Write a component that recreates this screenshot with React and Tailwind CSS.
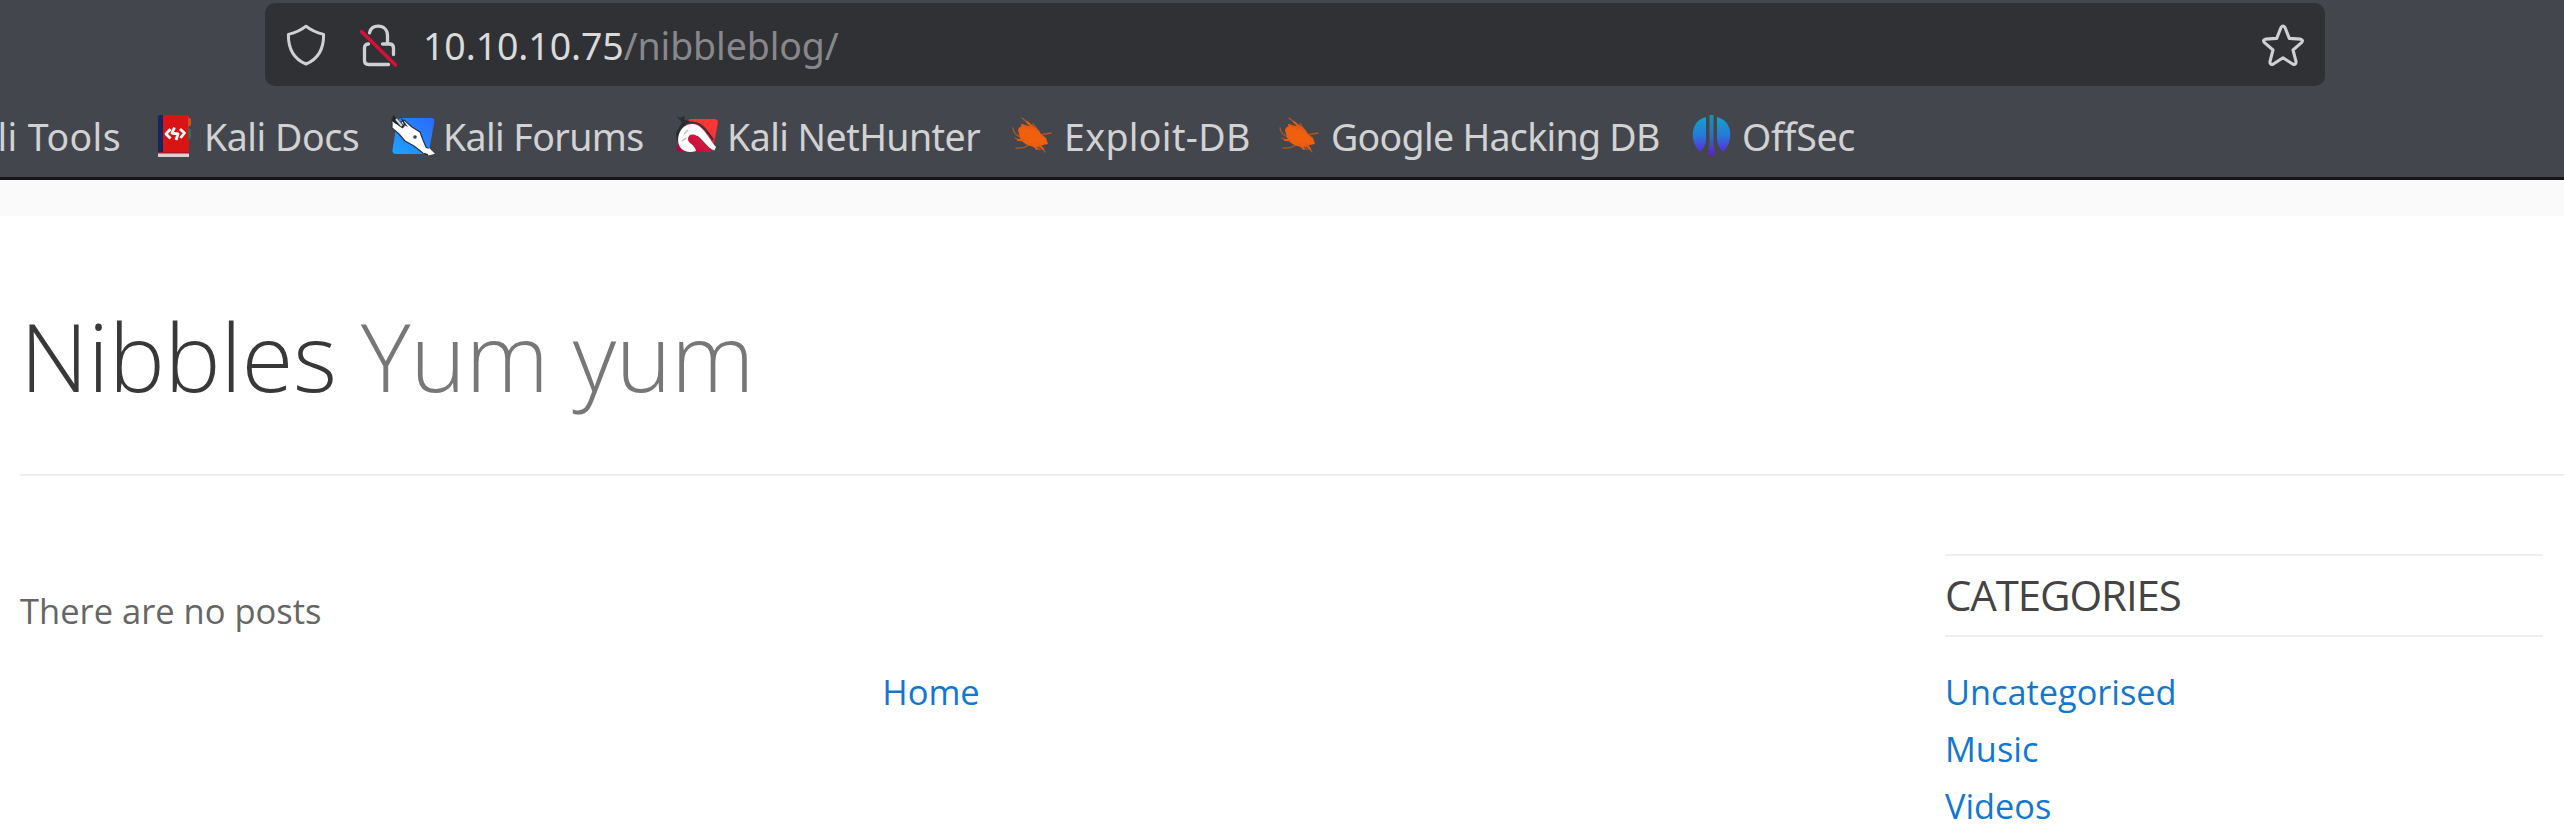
const shell = "h-[42px] w-[42px] shrink-0 overflow-visible";

function Shield() {
  return (
    <svg viewBox="0 0 42 42" className={shell} fill="none" stroke="#d0d0d2" strokeWidth="3" strokeLinejoin="round">
      <path d="M21 2.2C16 6.4 10 8.8 3.4 10.4C3.2 23 8 34.5 21 40C34 34.5 38.800 23 38.600 10.400C32 8.800 26 6.400 21 2.200Z" />
    </svg>
  );
}

function InsecureLock() {
  return (
    <svg viewBox="0 0 42 42" className={shell} fill="none" strokeLinecap="round" strokeLinejoin="round">
      <path d="M11.500 8.800C12.500 4.500 16 2.200 20.200 2.200C25.800 2.200 29.500 6 29.500 11.500V20M24.500 20H31.500Q35.500 20 35.500 24V30.500M10.500 20H10Q6.500 20 6.500 24V36.500Q6.500 40.500 10.500 40.500H30.500" stroke="#d0d0d2" strokeWidth="3.300" />
      <path d="M3.500 7.500L37.500 41" stroke="#d90f3b" strokeWidth="3.400" />
    </svg>
  );
}

function Star() {
  return (
    <svg viewBox="0 0 42 42" className={shell} fill="none" stroke="#d0d0d2" strokeWidth="3.100" strokeLinejoin="round">
      <path d="M19 3.500Q21 0.500 23 3.500L27.300 14.400L38.500 15.100Q41.800 16.200 39.500 18.600L31 26L34 37.300Q34.300 41.200 31 40.200L21 33.800L11 40.200Q7.700 41.200 8 37.300L11 26L2.500 18.600Q0.200 16.200 3.500 15.100L14.700 14.400Z" />
    </svg>
  );
}

function DocsIcon() {
  return (
    <svg viewBox="0 0 42 42" className={shell}>
      <path d="M2 2Q2 0 4 0H8V38H2Z" fill="#16265f" />
      <path d="M7 0H31Q33 0 33 2V38H7Z" fill="#d81414" />
      <path d="M32 2L35 4V10L32 12Z" fill="#c8561c" />
      <path d="M32 13L35 14V23L32 25Z" fill="#3b6b52" />
      <path d="M2 37.500H33V42H2Z" fill="#dccfd3" />
      <path d="M2 37H33V38.500H2Z" fill="#a81820" />
      <path d="M14.500 14L10 19L14.500 23.500M18.500 12.500L16 18L22 19L20 25M24 14L28.500 18L24.500 23" fill="none" stroke="#fff" strokeWidth="2.800" strokeLinejoin="round" />
    </svg>
  );
}

function ForumsIcon() {
  return (
    <svg viewBox="0 0 42 42" className={shell}>
      <defs>
        <linearGradient id="forum" x1="0" y1="1" x2="1" y2="0">
          <stop offset="0" stopColor="#1fa4ff" />
          <stop offset="1" stopColor="#2b68fb" />
        </linearGradient>
      </defs>
      <path d="M8 3H39Q43 3 42.300 7L37 36Q36 39 33 39H4Q0 39 0.500 35L5 7Z" fill="url(#forum)" />
      <path d="M0 4L8 8L12 5L20 12L28 17L31 25L34 32L39 35L37 40L31 38L22 31L13 26L7 19L0 13Z" fill="#fff" stroke="#293247" strokeWidth="1.200" />
      <path d="M1 0L13 11L10 14L0 6ZM8 1L16 12L12 10Z" fill="#24252a" />
      <path d="M4 4L10 11" stroke="#d7d7d7" strokeWidth="2" />
      <path d="M3 10L20 22L32 36L37 35L40 38L36 39" fill="none" stroke="#fff" strokeWidth="3" />
      <circle cx="23" cy="22" r="1.800" fill="#30405c" />
    </svg>
  );
}

function NetHunterIcon() {
  return (
    <svg viewBox="0 0 42 42" className={shell}>
      <defs>
        <linearGradient id="hunter" x1="0" y1="1" x2="1" y2="0">
          <stop offset="0" stopColor="#b5003f" />
          <stop offset="0.500" stopColor="#d9173b" />
          <stop offset="0.700" stopColor="#ff3434" />
        </linearGradient>
      </defs>
      <path d="M13 4H38Q42.500 4 41.800 8L37 34Q36 37 33 37H4Q0 37 0.500 33L4 22Z" fill="url(#hunter)" />
      <path d="M0 1L4 3L9 1L8 5L14 6L6 14L1 27L0 18L6 7Z" fill="#2b2c31" />
      <path d="M20 36C13 38 6 37 3 30C0 20 6 9 16 9C27 9 32 23 40 32L38 36C31 33 27 25 21 21C16 18 12 20 12 24C12 29 19 29 20 36Z" fill="#fff" />
      <path d="M11 8.500C21 5 28 11 37 25" fill="none" stroke="#35323a" strokeWidth="2" />
      <path d="M21 21C27 25 31 33 38 36" fill="none" stroke="#4a2a35" strokeWidth="1" />
      <path d="M8 19L12 15M6 26L10 23" stroke="#b9b9bd" strokeWidth="1.200" />
    </svg>
  );
}

function ExploitIcon() {
  return (
    <svg viewBox="0 0 42 42" className={shell}>
      <g transform="translate(0 2)">
        <path d="M6 13C8 8 13 8 18 9C23 9 27 13 29 17L34 21L36 27L31 28L26 30C18 30 11 27 8 21Z" fill="#ef5f0e" />
        <g fill="none" stroke="#e05c12" strokeLinecap="round">
          <path d="M10 8L18 11M15 5L24 13M11 23L6 23M20 27L25 32M27 28L31 32" strokeWidth="2.200" />
          <path d="M10 1L20 9M21 7L27 15M1 11Q2 18 9 20M28 18L39 16M28 27L33 35M24 26L28 33M17 28Q11 32 4 31M9 24L3 21" strokeWidth="1.300" opacity="0.700" />
        </g>
      </g>
    </svg>
  );
}

function OffSecIcon() {
  return (
    <svg viewBox="0 0 42 42" className={shell}>
      <defs>
        <linearGradient id="offsec" gradientUnits="userSpaceOnUse" x1="0" y1="1" x2="0" y2="41">
          <stop offset="0" stopColor="#12a5c8" />
          <stop offset="0.500" stopColor="#2878d6" />
          <stop offset="1" stopColor="#6518df" />
        </linearGradient>
      </defs>
      <g fill="url(#offsec)">
        <path d="M15 2V24Q15 31 9 37C-2 26-1 6 15 2Z" />
        <path d="M26 2V24Q26 31 32 37C43 26 42 6 26 2Z" />
        <path d="M18.500 0H22.500V28L24 39Q20.500 44 17 39L18.500 28Z" opacity="0.800" />
      </g>
    </svg>
  );
}

const bookmarks = [
  { name: "Kali Docs", Icon: DocsIcon, box: "w-[236px]", gap: "ml-[6px]", track: "tracking-[-0.45px]" },
  { name: "Kali Forums", Icon: ForumsIcon, box: "w-[284px]", gap: "ml-[9px]", track: "tracking-[-0.6px]" },
  { name: "Kali NetHunter", Icon: NetHunterIcon, box: "w-[336px]", gap: "ml-[9px]", track: "tracking-[-0.55px]" },
  { name: "Exploit-DB", Icon: ExploitIcon, box: "w-[267px]", gap: "ml-[10px]", track: "tracking-[0.35px]" },
  { name: "Google Hacking DB", Icon: ExploitIcon, box: "w-[412px]", gap: "ml-[10px]", track: "tracking-[-0.7px]" },
  { name: "OffSec", Icon: OffSecIcon, box: "w-[200px]", gap: "ml-[9px]", track: "tracking-[-0.3px]" },
];

const categories = ["Uncategorised", "Music", "Videos"];

export default function App() {
  return (
    <div className="flex h-[838px] w-full flex-col overflow-hidden bg-white font-['Open_Sans',sans-serif]">
      <header className="flex h-[180px] shrink-0 flex-col border-b-[3px] border-[#16161a] bg-[#44464e] pt-[3px] font-['Noto_Sans',sans-serif]">
        <div className="ml-[265px] flex h-[83px] w-[2060px] items-center rounded-[10px] bg-[#303135] pl-[20px] pr-[21px]">
          <Shield />
          <div className="ml-[31px]">
            <InsecureLock />
          </div>
          <div className="ml-[23px] whitespace-pre pt-[2px] text-[37.5px] leading-[81px] tracking-[-0.1px] text-[#dadada]">
            10.10.10.75<span className="text-[#88888b]">/nibbleblog/</span>
          </div>
          <div className="ml-auto">
            <Star />
          </div>
        </div>
        <nav className="flex h-[91px] items-center whitespace-nowrap pt-[9px] text-[37.5px] leading-[80px] text-[#d2d2d3]">
          <div className="flex w-[156px] shrink-0 justify-end pr-[35px] pt-[2px] tracking-[0.4px]">li Tools</div>
          {bookmarks.map(({ name, Icon, box, gap, track }) => (
            <a key={name} className={`flex shrink-0 items-center ${box}`}>
              <Icon />
              <span className={`pt-[2px] ${gap} ${track}`}>{name}</span>
            </a>
          ))}
        </nav>
      </header>
      <div className="h-[36px] shrink-0 bg-[#fafafa]" />
      <div className="flex flex-col pl-[20px]">
        <h1 className="h-[260px] border-b-[2px] border-[#efefef] pt-[60px] text-[94.5px] leading-[160px] font-light tracking-[-0.4px] whitespace-nowrap text-[#383838]">
          Nibbles <span className="text-[#777]">Yum yum</span>
        </h1>
        <div className="flex pr-[21px] text-[34.5px]">
          <main className="w-[1822px] pt-[105px]">
            <p className="leading-[60px] text-[#666]">There are no posts</p>
            <div className="pt-[21px] text-center leading-[60px] text-[#1177d1]">Home</div>
          </main>
          <aside className="ml-[103px] flex-1 pt-[78px]">
            <h2 className="h-[83px] border-y-[2px] border-[#efefef] text-[42px] leading-[78px] tracking-[-1.1px] text-[#444]">CATEGORIES</h2>
            <ul className="pt-[26px] text-[34.3px] text-[#1177d1]">
              {categories.map((name) => (
                <li key={name} className="h-[57.2px] leading-[57.2px]">{name}</li>
              ))}
            </ul>
          </aside>
        </div>
      </div>
    </div>
  );
}
